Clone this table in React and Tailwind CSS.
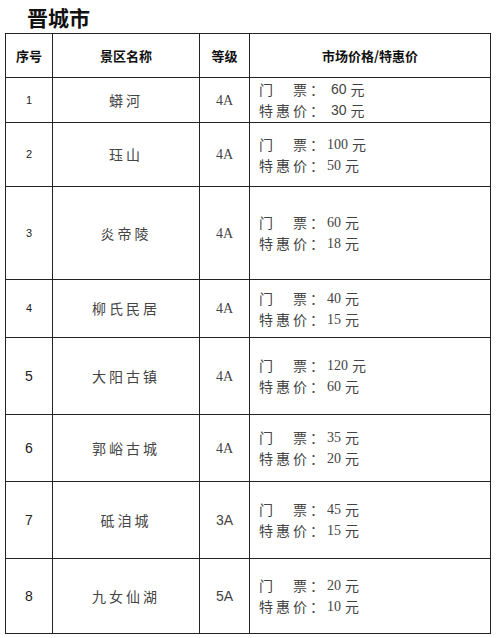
const rows = [
  { n: "1", name: "蟒河", g: "4A", p1: "60", p2: "30", h: 45, pSans: true },
  { n: "2", name: "珏山", g: "4A", p1: "100", p2: "50", h: 64 },
  { n: "3", name: "炎帝陵", g: "4A", p1: "60", p2: "18", h: 93 },
  { n: "4", name: "柳氏民居", g: "4A", p1: "40", p2: "15", h: 58 },
  { n: "5", name: "大阳古镇", g: "4A", p1: "120", p2: "60", h: 77, big: true },
  { n: "6", name: "郭峪古城", g: "4A", p1: "35", p2: "20", h: 67, big: true },
  { n: "7", name: "砥洎城", g: "3A", p1: "45", p2: "15", h: 77, big: true, gSans: true },
  { n: "8", name: "九女仙湖", g: "5A", p1: "20", p2: "10", h: 75, big: true, gSans: true },
];

const cjk = "font-['Noto_Sans_CJK_SC',sans-serif]";

function PriceLine({ label, value, sans }) {
  return (
    <div className="flex items-center h-[21px] overflow-hidden leading-[21px]">
      <span className={`tracking-[3px] w-[68px] ${cjk}`}>{label}</span>
      <span className={sans ? "font-['Liberation_Sans',sans-serif] pl-[4px]" : "font-['Liberation_Serif',serif]"}>{value}</span>
      <span className={`ml-[4px] ${cjk}`}>元</span>
    </div>
  );
}

export default function App() {
  return (
    <div className="w-[499px] h-[638px] bg-white overflow-hidden">
      <div className="pl-[27px] pt-[4px] h-[33px]">
        <span className={`text-[21px] leading-[26px] font-bold text-[#111] ${cjk}`}>晋城市</span>
      </div>
      <table className="ml-[5px] border-collapse w-[485px] table-fixed">
        <colgroup>
          <col className="w-[47px]" />
          <col className="w-[147px]" />
          <col className="w-[50px]" />
          <col className="w-[241px]" />
        </colgroup>
        <thead>
          <tr className="h-[44px]">
            {["序号", "景区名称", "等级", "市场价格/特惠价"].map((t) => (
              <th key={t} className={`border border-[#222] text-center text-[13px] font-bold text-[#111] p-0 ${cjk}`}>{t}</th>
            ))}
          </tr>
        </thead>
        <tbody>
          {rows.map((r) => (
            <tr key={r.n} style={{ height: r.h }}>
              <td className={`border border-[#222] p-0 text-center text-[#222] font-['Liberation_Sans',sans-serif] ${r.big ? "text-[14px]" : "text-[11px]"}`}>{r.n}</td>
              <td className={`border border-[#222] p-0 text-center text-[14px] text-[#444] tracking-[3px] ${cjk}`}>{r.name}</td>
              <td className={`border border-[#222] p-0 text-center text-[14px] text-[#444] ${r.gSans ? "font-['Liberation_Sans',sans-serif]" : "font-['Liberation_Serif',serif]"}`}>{r.g}</td>
              <td className="border border-[#222] p-0 pl-[9px] align-middle">
                <div className="flex flex-col text-[14px] text-[#444]">
                  <PriceLine label="门　票：" value={r.p1} sans={r.pSans} />
                  <PriceLine label="特惠价：" value={r.p2} sans={r.pSans} />
                </div>
              </td>
            </tr>
          ))}
        </tbody>
      </table>
    </div>
  );
}
